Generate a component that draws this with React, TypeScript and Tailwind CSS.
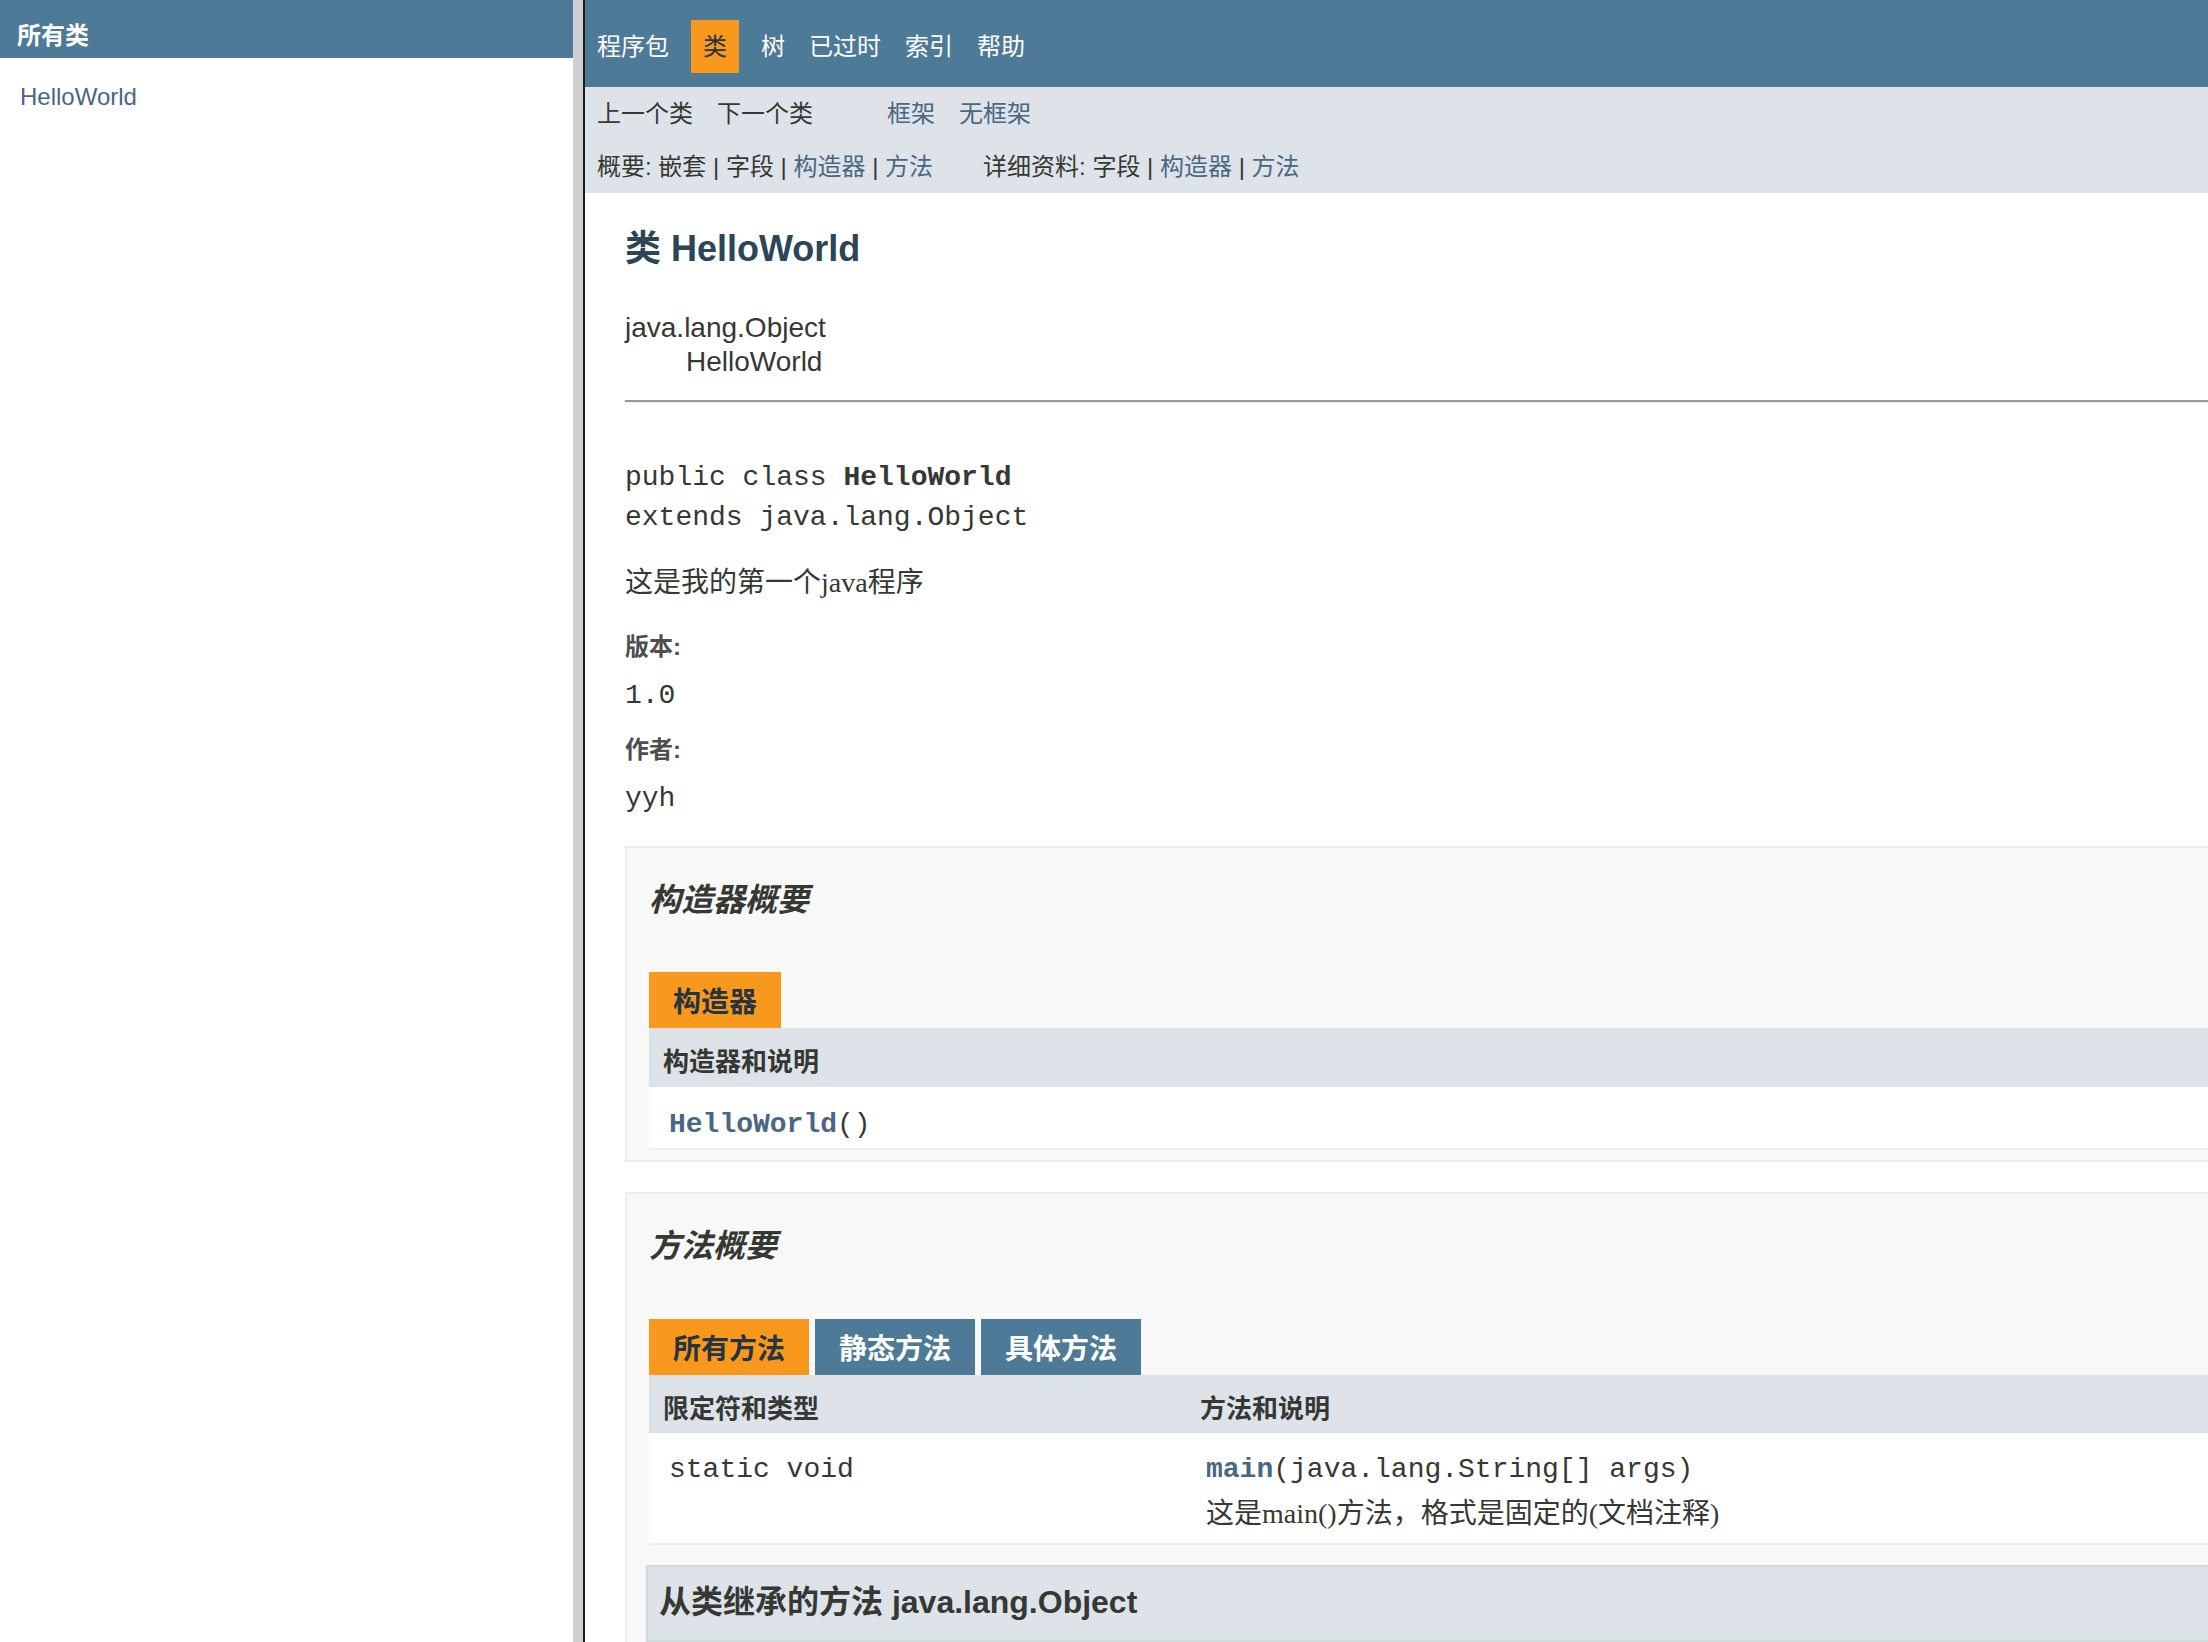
import React from "react";

const sans = "font-['Liberation_Sans','Noto_Sans_CJK_SC',sans-serif]";
const mono = "font-['Liberation_Mono','Noto_Sans_CJK_SC',monospace]";
const serif = "font-['Liberation_Serif','Noto_Sans_CJK_SC',serif]";

function NavItem({ children, active }: { children: React.ReactNode; active?: boolean }) {
  return active ? (
    <span className="h-[53px] px-[12px] mx-[10px] flex items-center bg-[#F8981D] text-[#253441]">{children}</span>
  ) : (
    <span className="h-[53px] px-[12px] flex items-center">{children}</span>
  );
}

function Tab({ children, active }: { children: React.ReactNode; active?: boolean }) {
  return active ? (
    <span className="h-[56px] px-[24px] pt-[5px] mr-[6px] flex items-center bg-[#F8981D] text-[#253441] text-[28px] font-bold">{children}</span>
  ) : (
    <span className="h-[56px] px-[24px] pt-[5px] mr-[6px] flex items-center bg-[#4D7A97] text-white text-[28px] font-bold">{children}</span>
  );
}

export default function App() {
  return (
    <div className={`flex w-[2208px] h-[1642px] overflow-hidden bg-white text-[#353833] ${sans}`}>
      {/* Left frame */}
      <aside className="w-[573px] shrink-0 bg-white">
        <div className="h-[58px] bg-[#4D7A97] pl-[17px] pt-[19px] text-[24px] leading-[34px] font-bold text-white">所有类</div>
        <div className="pl-[20px] mt-[23px] text-[24px] leading-[32px] text-[#4A6782]">HelloWorld</div>
      </aside>
      <div className="w-[10px] shrink-0 bg-[#cfcfcf]" />
      <div className="w-[2px] shrink-0 bg-[#1c1c1c]" />

      {/* Right frame */}
      <main className="flex-1 min-w-0 overflow-hidden">
        <div className="h-[87px] bg-[#4D7A97] pt-[20px] flex items-start text-[24px] text-white">
          <NavItem>程序包</NavItem>
          <NavItem active>类</NavItem>
          <NavItem>树</NavItem>
          <NavItem>已过时</NavItem>
          <NavItem>索引</NavItem>
          <NavItem>帮助</NavItem>
        </div>
        <div className="h-[106px] bg-[#DEE3E9] text-[24px]">
          <div className="h-[53px] flex items-center">
            <div className="flex mr-[50px]">
              <span className="px-[12px]">上一个类</span>
              <span className="px-[12px]">下一个类</span>
            </div>
            <div className="flex text-[#4A6782]">
              <span className="px-[12px]">框架</span>
              <span className="px-[12px]">无框架</span>
            </div>
          </div>
          <div className="h-[53px] flex items-center pl-[12px] whitespace-pre">
            <span className="mr-[50px]">
              概要:{"\u00a0"}嵌套{"\u00a0|\u00a0"}字段{"\u00a0|\u00a0"}
              <span className="text-[#4A6782]">构造器</span>
              {"\u00a0|\u00a0"}
              <span className="text-[#4A6782]">方法</span>
            </span>
            <span>
              详细资料:{"\u00a0"}字段{"\u00a0|\u00a0"}
              <span className="text-[#4A6782]">构造器</span>
              {"\u00a0|\u00a0"}
              <span className="text-[#4A6782]">方法</span>
            </span>
          </div>
        </div>

        <div className="w-[1800px] pl-[40px]">
          <div className="mt-[31px] text-[36px] leading-[50px] font-bold text-[#2c4557]">类 HelloWorld</div>
          <div className="mt-[37px] text-[28px] leading-[34px]">java.lang.Object</div>
          <div className="pl-[61px] text-[28px] leading-[34px]">HelloWorld</div>
          <div className="mt-[21px] border-t-2 border-t-[#9a9a9a] border-b border-b-[#eeeeee]" />

          <div className={`mt-[55px] text-[28px] leading-[40px] whitespace-pre ${mono}`}>
            <div>
              public class <span className="font-bold">HelloWorld</span>
            </div>
            <div>extends java.lang.Object</div>
          </div>

          <div className={`mt-[25px] text-[28px] leading-[40px] ${serif}`}>这是我的第一个java程序</div>

          <div className="mt-[28px] text-[24px] leading-[32px] font-bold text-[#4E4E4E]">版本:</div>
          <div className={`mt-[13px] text-[28px] leading-[40px] ${mono}`}>1.0</div>
          <div className="mt-[18px] text-[24px] leading-[32px] font-bold text-[#4E4E4E]">作者:</div>
          <div className={`mt-[13px] text-[28px] leading-[40px] ${mono}`}>yyh</div>

          {/* Constructor summary */}
          <section className="mt-[27px] border-2 border-[#ededed] bg-[#f8f8f8] pl-[20px] pb-[10px]">
            <h3 className="mt-[30px] ml-[2px] text-[32px] leading-[44px] italic font-bold">构造器概要</h3>
            <div className="mt-[50px] ml-[2px] flex">
              <Tab active>构造器</Tab>
            </div>
            <div className="ml-[2px] border-b-2 border-[#eeeeee]">
              <div className="h-[59px] bg-[#DEE3E9] pl-[14px] pt-[16px] text-[26px] leading-[36px] font-bold">构造器和说明</div>
              <div className={`h-[61px] bg-white pl-[20px] pt-[18px] text-[28px] leading-[40px] ${mono}`}>
                <span className="font-bold text-[#4A6782]">HelloWorld</span>()
              </div>
            </div>
          </section>

          {/* Method summary */}
          <section className="mt-[30px] border-2 border-[#ededed] bg-[#f8f8f8] pl-[20px] pb-[10px]">
            <h3 className="mt-[30px] ml-[2px] text-[32px] leading-[44px] italic font-bold">方法概要</h3>
            <div className="mt-[51px] ml-[2px] flex">
              <Tab active>所有方法</Tab>
              <Tab>静态方法</Tab>
              <Tab>具体方法</Tab>
            </div>
            <div className="ml-[2px] border-b-2 border-[#eeeeee]">
              <div className="h-[58px] bg-[#DEE3E9] flex text-[26px] leading-[36px] font-bold">
                <div className="w-[537px] shrink-0 pl-[14px] pt-[16px]">限定符和类型</div>
                <div className="pl-[14px] pt-[16px]">方法和说明</div>
              </div>
              <div className="h-[110px] bg-white flex">
                <div className={`w-[537px] shrink-0 pl-[20px] pt-[17px] text-[28px] leading-[40px] whitespace-pre ${mono}`}>static void</div>
                <div className="pl-[20px] pt-[17px]">
                  <div className={`text-[28px] leading-[40px] whitespace-pre ${mono}`}>
                    <span className="font-bold text-[#4A6782]">main</span>(java.lang.String[] args)
                  </div>
                  <div className={`mt-[4px] text-[28px] leading-[40px] ${serif}`}>这是main()方法，格式是固定的(文档注释)</div>
                </div>
              </div>
            </div>
            <div className="mt-[20px] ml-[-1px] h-[77px] border-2 border-[#d0d9e0] bg-[#DEE3E9] pl-[11px] pt-[13px] text-[32px] leading-[44px] font-bold">
              从类继承的方法 java.lang.Object
            </div>
          </section>
        </div>
      </main>
    </div>
  );
}
